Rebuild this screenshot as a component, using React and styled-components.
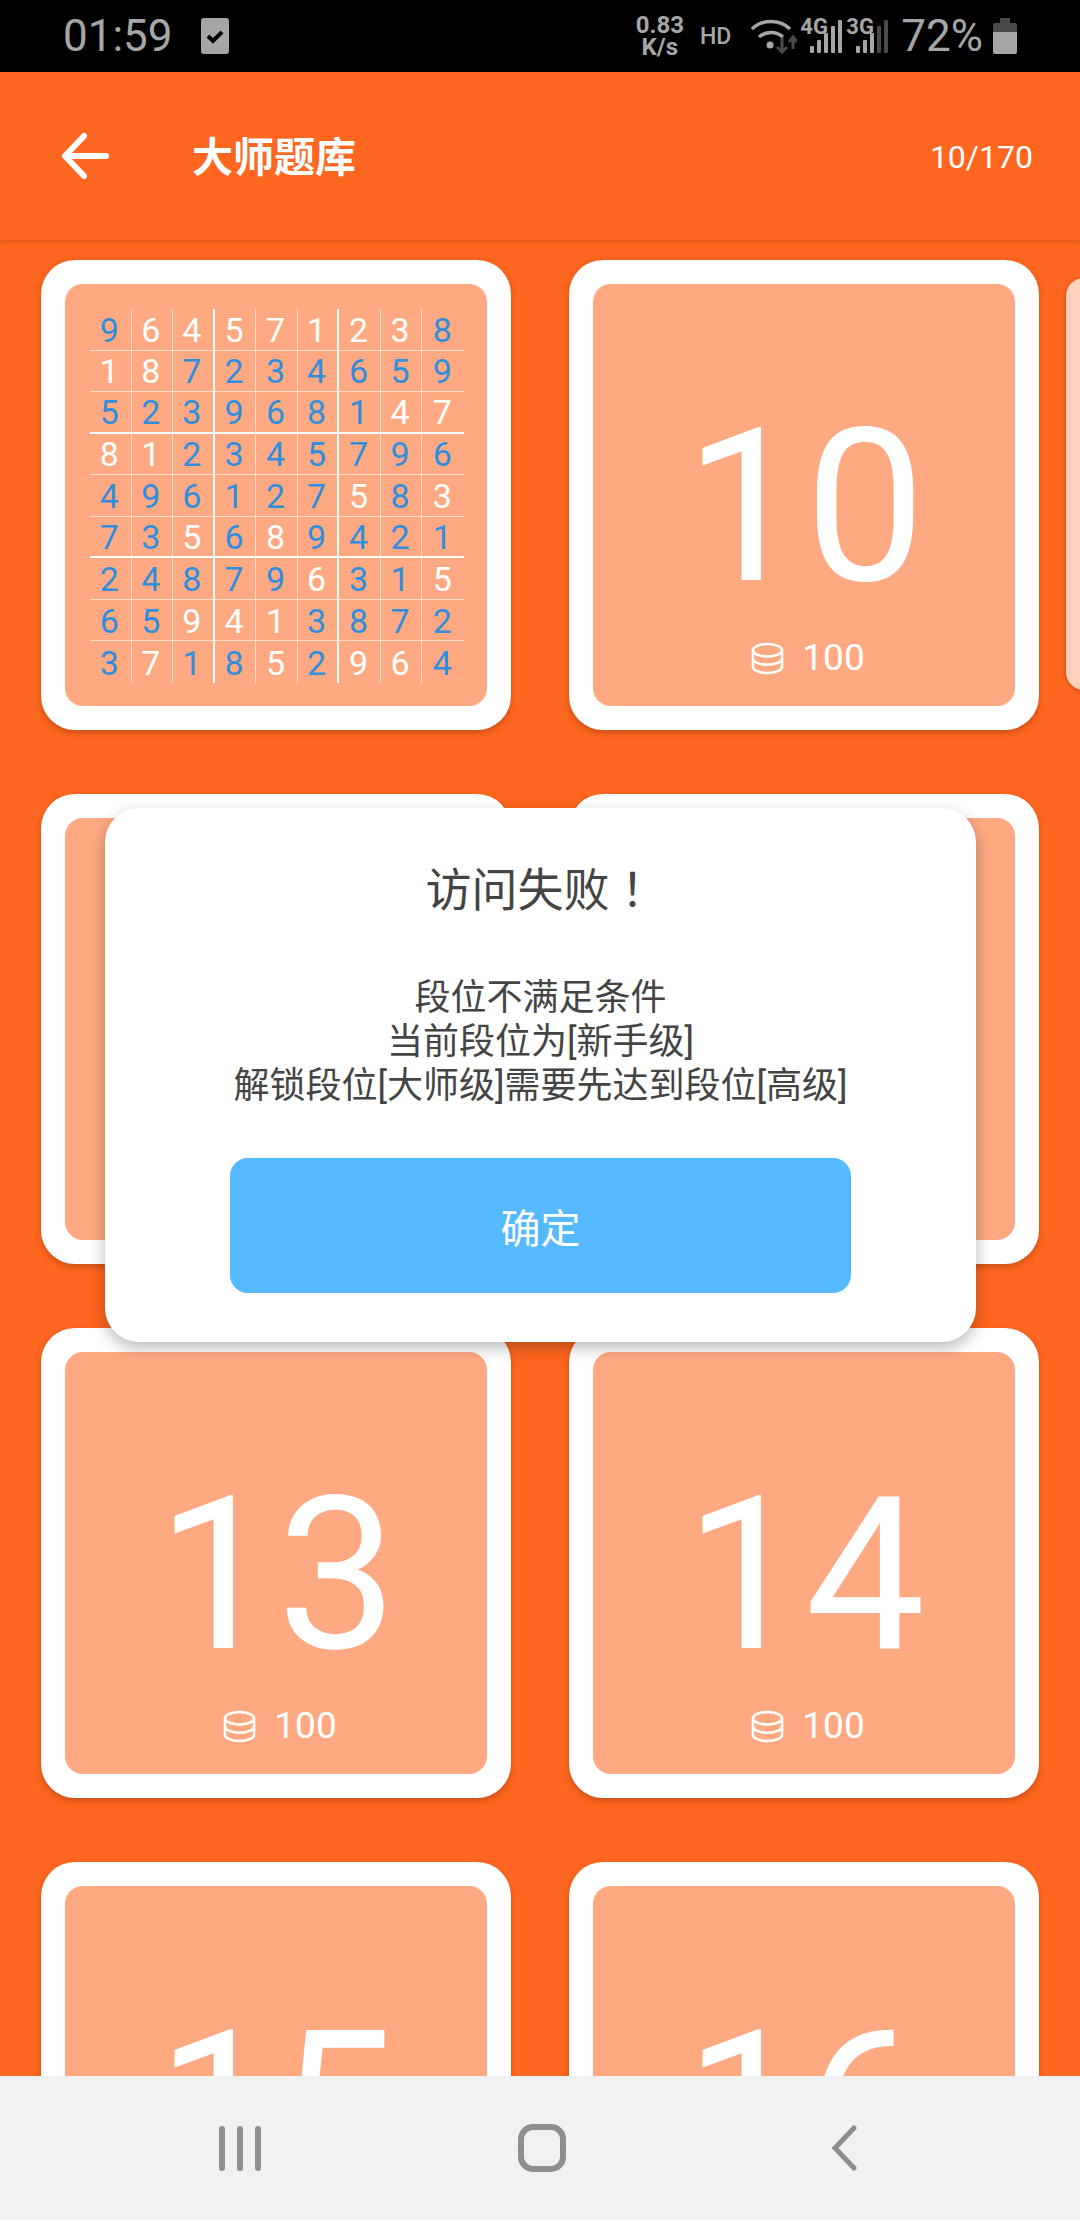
import styled, { createGlobalStyle } from "styled-components";

const ORANGE = "#ff661f";
const PEACH = "#ffa982";
const BLUE = "#2f8edd";
const GREY = "#a6a6a6";
const DIM = "#4a4a4a";

const GlobalStyle = createGlobalStyle`
  html, body {
    margin: 0;
    padding: 0;
    background: ${ORANGE};
  }
  * {
    box-sizing: border-box;
  }
`;

const Screen = styled.div`
  position: relative;
  width: 1080px;
  height: 2220px;
  overflow: hidden;
  display: flex;
  flex-direction: column;
  background: ${ORANGE};
  font-family: Roboto, "Noto Sans CJK SC", sans-serif;
`;

const StatusBar = styled.div`
  flex: 0 0 72px;
  display: flex;
  align-items: center;
  padding: 0 63px 0 63px;
  background: #000;
  color: ${GREY};
`;

const StatusText = styled.span`
  font-size: 44px;
  line-height: 72px;
`;

const CheckBadge = styled.svg`
  margin-left: 28px;
  width: 28px;
  height: 36px;
`;

const StatusRight = styled.div`
  margin-left: auto;
  display: flex;
  align-items: center;
`;

const Speed = styled.div`
  font-size: 24px;
  font-weight: 700;
  line-height: 22px;
  text-align: center;
`;

const Hd = styled.span`
  margin-left: 16px;
  font-size: 23px;
  font-weight: 500;
`;

const WifiIcon = styled.svg`
  margin-left: 19px;
  width: 47px;
  height: 36px;
`;

const Signal = styled.div`
  position: relative;
  margin-left: ${(p) => p.$gap}px;
  width: 41px;
  height: 36px;
`;

const SignalLabel = styled.span`
  position: absolute;
  left: -1px;
  top: -3px;
  font-size: 22px;
  font-weight: 700;
  line-height: 24px;
`;

const SignalBars = styled.svg`
  display: block;
  width: 41px;
  height: 36px;
`;

const Percent = styled(StatusText)`
  margin-left: 13px;
`;

const BatteryIcon = styled.svg`
  margin-left: 10px;
  width: 24px;
  height: 36px;
`;

const AppBar = styled.header`
  position: relative;
  z-index: 2;
  flex: 0 0 168px;
  display: flex;
  align-items: center;
  padding: 0 47px 0 61px;
  background: ${ORANGE};
  box-shadow: 0 2px 4px rgba(0, 0, 0, 0.14);
  color: #fff;
`;

const BackArrow = styled.svg`
  width: 48px;
  height: 48px;
`;

const Title = styled.h1`
  margin: 3px 0 0 83px;
  font-size: 41px;
  font-weight: 700;
  line-height: 56px;
`;

const Count = styled.span`
  margin: 2px 0 0 auto;
  font-size: 32px;
`;

const Content = styled.main`
  position: relative;
  flex: 1;
  min-height: 0;
  overflow: hidden;
  padding: 20px 0 0 41px;
`;

const CardGrid = styled.div`
  display: grid;
  grid-template-columns: 470px 470px;
  grid-auto-rows: 470px;
  column-gap: 58px;
  row-gap: 64px;
`;

const Card = styled.div`
  padding: 24px;
  border-radius: 34px;
  background: #fff;
  box-shadow: 0 3px 6px rgba(0, 0, 0, 0.22);
`;

const CardFace = styled.div`
  height: 100%;
  display: flex;
  flex-direction: column;
  align-items: center;
  padding-top: 116px;
  border-radius: 18px;
  background: ${PEACH};
  color: #fff;
`;

const SudokuFace = styled(CardFace)`
  padding: 25px 23px 23px 25px;
`;

const LevelNumber = styled.div`
  margin-left: 2px;
  font-size: 214px;
  line-height: 214px;
`;

const Cost = styled.div`
  display: flex;
  align-items: center;
  gap: 18px;
  margin: 24px 0 0 8px;
  font-size: 37px;
  line-height: 40px;
`;

const CoinIcon = styled.svg`
  width: 33px;
  height: 33px;
`;

const Board = styled.div`
  width: 374px;
  height: 374px;
  display: grid;
  grid-template-columns: repeat(9, 1fr);
  grid-template-rows: repeat(9, 1fr);
`;

const line = (index) => {
  if (index === 8) return "none";
  if (index === 2 || index === 5) return "2px solid #fff";
  return "1px solid rgba(255,255,255,0.6)";
};

const Cell = styled.div`
  display: flex;
  align-items: center;
  justify-content: center;
  padding: 1px 2px 0 0;
  border-right: ${(p) => line(p.$col)};
  border-bottom: ${(p) => line(p.$row)};
  color: ${(p) => (p.$given ? "#fff" : BLUE)};
  font-size: 34px;
  line-height: 1;
`;

const NextPeek = styled.div`
  position: absolute;
  top: 38px;
  left: 1066px;
  width: 40px;
  height: 412px;
  border-radius: 18px;
  background: #ffd0bb;
  box-shadow: 0 1px 4px rgba(0, 0, 0, 0.3);
`;

const Dialog = styled.section`
  position: absolute;
  z-index: 3;
  top: 808px;
  left: 105px;
  width: 871px;
  height: 534px;
  display: flex;
  flex-direction: column;
  align-items: center;
  padding-top: 52px;
  border-radius: 34px;
  background: #fff;
  box-shadow: 0 6px 16px rgba(0, 0, 0, 0.28);
  color: #444;
`;

const DialogTitle = styled.h2`
  margin: 0;
  font-size: 46px;
  font-weight: 400;
  line-height: 60px;
`;

const FullStop = styled.span`
  font-family: "Noto Sans CJK TC", sans-serif;
  line-height: 0;
`;

const DialogBody = styled.p`
  margin: 56px 0 0;
  font-size: 36px;
  line-height: 44px;
  text-align: center;
  white-space: pre-line;
`;

const ConfirmButton = styled.button`
  width: 621px;
  height: 135px;
  margin-top: 50px;
  border: 0;
  border-radius: 18px;
  background: #55b9ff;
  color: #fff;
  font: inherit;
  font-size: 40px;
`;

const NavBar = styled.nav`
  position: relative;
  z-index: 2;
  flex: 0 0 144px;
  display: grid;
  grid-template-columns: repeat(3, 302px);
  place-items: center;
  padding-left: 89px;
  background: #f1f1f1;
`;

const Recents = styled.div`
  display: flex;
  gap: 12px;
`;

const RecentBar = styled.span`
  width: 6px;
  height: 45px;
  border-radius: 3px;
  background: #8e8e8e;
`;

const HomeButton = styled.span`
  width: 48px;
  height: 48px;
  border: 6px solid #8e8e8e;
  border-radius: 15px;
`;

const NavBack = styled.svg`
  width: 26px;
  height: 46px;
`;

const board = [
  ["964571238", "011111110"],
  ["187234659", "110000000"],
  ["523968147", "000000011"],
  ["812345796", "110000000"],
  ["496127583", "000000101"],
  ["735689421", "001010000"],
  ["248796315", "000001001"],
  ["659413872", "001110000"],
  ["371852964", "010010110"],
];

const levels = [null, 10, 11, 12, 13, 14, 15, 16];

function Coin() {
  return (
    <CoinIcon viewBox="0 0 34 33" fill="none" stroke="#fff" strokeWidth="2.6">
      <ellipse cx="17" cy="8" rx="15" ry="6.5" />
      <path d="M2 8v17c0 3.6 6.7 6.5 15 6.5s15-2.9 15-6.5V8" />
      <path d="M2 16.5c0 3.6 6.7 6.5 15 6.5s15-2.9 15-6.5" />
    </CoinIcon>
  );
}

function SignalStrength({ label, gap, lit }) {
  return (
    <Signal $gap={gap}>
      <SignalBars viewBox="0 0 41 36">
        {[7, 13, 20, 27, 33].map((h, i) => (
          <rect
            key={h}
            x={9 + i * 7}
            y={35 - h}
            width="4"
            height={h}
            rx="1"
            fill={i < lit ? GREY : DIM}
          />
        ))}
      </SignalBars>
      <SignalLabel>{label}</SignalLabel>
    </Signal>
  );
}

export default function App() {
  return (
    <Screen>
      <GlobalStyle />
      <StatusBar>
        <StatusText>01:59</StatusText>
        <CheckBadge viewBox="0 0 28 36">
          <rect width="28" height="36" rx="3" fill={GREY} />
          <path d="M7 18l5 5 9-9" fill="none" stroke="#000" strokeWidth="4" />
        </CheckBadge>
        <StatusRight>
          <Speed>
            0.83
            <br />
            K/s
          </Speed>
          <Hd>HD</Hd>
          <WifiIcon viewBox="0 0 47 36" fill="none">
            <path d="M2 11C12 1 30 1 40 11" stroke={GREY} strokeWidth="3.5" />
            <path d="M9 19c7-6 17-6 24 0" stroke={GREY} strokeWidth="3.5" />
            <circle cx="20" cy="27" r="3.5" fill={GREY} />
            <path d="M32 20v14m-5-5l5 5 5-5" stroke={DIM} strokeWidth="3" />
            <path d="M43 31V19m-4 5l4-5 4 5" stroke={DIM} strokeWidth="3" />
          </WifiIcon>
          <SignalStrength label="4G" gap={4} lit={5} />
          <SignalStrength label="3G" gap={5} lit={3} />
          <Percent>72%</Percent>
          <BatteryIcon viewBox="0 0 24 36">
            <path d="M7 0h10v5h5a2 2 0 012 2v7H0V7a2 2 0 012-2h5z" fill={DIM} />
            <path d="M0 14h24v20a2 2 0 01-2 2H2a2 2 0 01-2-2z" fill={GREY} />
          </BatteryIcon>
        </StatusRight>
      </StatusBar>

      <AppBar>
        <BackArrow viewBox="0 0 48 48" fill="none" stroke="#fff" strokeWidth="6" strokeLinecap="round" strokeLinejoin="round">
          <path d="M45 24H4M23 4L4 24l19 20" />
        </BackArrow>
        <Title>大师题库</Title>
        <Count>10/170</Count>
      </AppBar>

      <Content>
        <CardGrid>
          {levels.map((level, i) =>
            level === null ? (
              <Card key={i}>
                <SudokuFace>
                  <Board>
                    {board.flatMap(([digits, given], row) =>
                      [...digits].map((d, col) => (
                        <Cell key={`${row}-${col}`} $row={row} $col={col} $given={given[col] === "1"}>
                          {d}
                        </Cell>
                      ))
                    )}
                  </Board>
                </SudokuFace>
              </Card>
            ) : (
              <Card key={i}>
                <CardFace>
                  <LevelNumber>{level}</LevelNumber>
                  <Cost>
                    <Coin />
                    100
                  </Cost>
                </CardFace>
              </Card>
            )
          )}
        </CardGrid>
        <NextPeek />
      </Content>

      <NavBar>
        <Recents>
          <RecentBar />
          <RecentBar />
          <RecentBar />
        </Recents>
        <HomeButton />
        <NavBack viewBox="0 0 26 46" fill="none" stroke="#8e8e8e" strokeWidth="5" strokeLinecap="round">
          <path d="M23 3L4 23l19 20" />
        </NavBack>
      </NavBar>

      <Dialog>
        <DialogTitle>
          访问失败<FullStop>！</FullStop>
        </DialogTitle>
        <DialogBody>
          {"段位不满足条件\n当前段位为[新手级]\n解锁段位[大师级]需要先达到段位[高级]"}
        </DialogBody>
        <ConfirmButton>确定</ConfirmButton>
      </Dialog>
    </Screen>
  );
}
